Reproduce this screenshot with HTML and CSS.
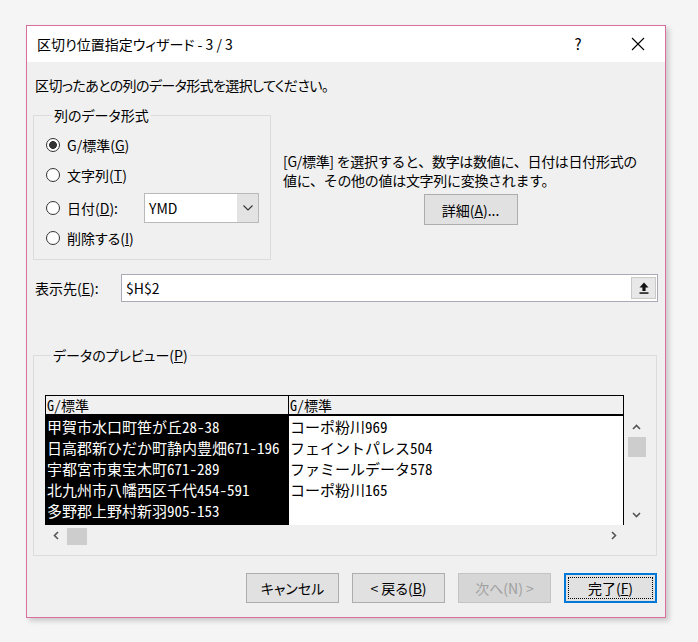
FILE: index.html
```html
<!DOCTYPE html>
<html lang="ja">
<head>
<meta charset="utf-8">
<title>区切り位置指定ウィザード</title>
<link rel="stylesheet" href="styles.css">
</head>
<body>
<div class="dialog">
  <div class="titlebar">
    <span class="title">区切り位置指定ウィザード - 3 / 3</span>
    <span class="cap-help">?</span>
    <span class="cap-close"><svg width="14" height="14" viewBox="0 0 14 14"><path d="M1 1L13 13M13 1L1 13" stroke="#000" stroke-width="1.1" fill="none"/></svg></span>
  </div>
  <div class="content">
    <p class="intro">区切ったあとの列のデータ形式を選択してください。</p>
    <div class="top">
      <fieldset class="group fmt">
        <legend>列のデータ形式</legend>
        <div class="radio r1"><span class="dot checked"></span><span>G/標準(<u>G</u>)</span></div>
        <div class="radio r2"><span class="dot"></span><span>文字列(<u>T</u>)</span></div>
        <div class="radio r3"><span class="dot"></span><span class="lbl">日付(<u>D</u>):</span>
          <div class="combo"><span class="val">YMD</span><span class="drop"><svg width="10" height="6" viewBox="0 0 10 6"><path d="M0.5 0.5L5 5L9.5 0.5" stroke="#333" stroke-width="1.1" fill="none"/></svg></span></div>
        </div>
        <div class="radio r4"><span class="dot"></span><span>削除する(<u>I</u>)</span></div>
      </fieldset>
      <div class="desc">
        <p>[G/標準] を選択すると、数字は数値に、日付は日付形式の<br>値に、その他の値は文字列に変換されます。</p>
        <button class="btn detail">詳細(<u>A</u>)...</button>
      </div>
    </div>
    <div class="dest">
      <span class="dest-lbl">表示先(<u>E</u>):</span>
      <div class="input"><span class="val">$H$2</span><span class="upbtn"><svg width="10" height="12" viewBox="0 0 10 12"><path d="M5 0.5L9.5 5.5H6.6V9H3.4V5.5H0.5Z" fill="#111"/><rect x="0.5" y="10.3" width="9" height="1.5" fill="#111"/></svg></span></div>
    </div>
    <fieldset class="group preview">
      <legend>データのプレビュー(<u>P</u>)</legend>
      <div class="grid">
        <div class="ghead">
          <div class="c1">G/標準</div>
          <div class="c2">G/標準</div>
        </div>
        <div class="gbody">
          <div class="c1">
            <div class="row">甲賀市水口町笹が丘28-38</div>
            <div class="row">日高郡新ひだか町静内豊畑671-196</div>
            <div class="row">宇都宮市東宝木町671-289</div>
            <div class="row">北九州市八幡西区千代454-591</div>
            <div class="row">多野郡上野村新羽905-153</div>
          </div>
          <div class="c2">
            <div class="row">コーポ粉川969</div>
            <div class="row">フェイントパレス504</div>
            <div class="row">ファミールデータ578</div>
            <div class="row">コーポ粉川165</div>
          </div>
        </div>
        <div class="vscroll">
          <span class="arr"><svg width="9" height="6" viewBox="0 0 9 6"><path d="M1 5L4.5 1.5L8 5" stroke="#555" stroke-width="1.6" fill="none"/></svg></span>
          <span class="vthumb"></span>
          <span class="spacer"></span>
          <span class="arr"><svg width="9" height="6" viewBox="0 0 9 6"><path d="M1 1L4.5 4.5L8 1" stroke="#555" stroke-width="1.6" fill="none"/></svg></span>
        </div>
        <div class="hscroll">
          <span class="arr"><svg width="6" height="9" viewBox="0 0 6 9"><path d="M5 1L1.5 4.5L5 8" stroke="#555" stroke-width="1.6" fill="none"/></svg></span>
          <span class="hthumb"></span>
          <span class="spacer"></span>
          <span class="arr"><svg width="6" height="9" viewBox="0 0 6 9"><path d="M1 1L4.5 4.5L1 8" stroke="#555" stroke-width="1.6" fill="none"/></svg></span>
        </div>
      </div>
    </fieldset>
    <div class="buttons">
      <button class="btn">キャンセル</button>
      <button class="btn">&lt; 戻る(<u>B</u>)</button>
      <button class="btn disabled">次へ(N) &gt;</button>
      <button class="btn default">完了(<u>F</u>)</button>
    </div>
  </div>
</div>
</body>
</html>
```
FILE: styles.css
```css
* { box-sizing: border-box; }
html, body { margin: 0; padding: 0; }
body {
  width: 698px;
  height: 642px;
  overflow: hidden;
  background: #f5f5f5;
  font-family: "Noto Sans CJK JP", sans-serif;
  font-size: 14px;
  color: #000;
  font-feature-settings: "palt";
}
.dialog {
  margin: 25px 0 0 26px;
  width: 640px;
  height: 593px;
  border: 1px solid #d9709c;
  background: #f0f0f0;
  box-shadow: 3px 3px 5px rgba(0, 0, 0, 0.18);
  display: flex;
  flex-direction: column;
}
.titlebar {
  height: 36px;
  background: #fff;
  display: flex;
  align-items: center;
  padding-left: 10px;
  flex: none;
}
.title { flex: 1; line-height: 18px; }
.cap-help { width: 30px; text-align: center; margin-right: 30px; font-size: 15px; line-height: 18px; }
.cap-close { width: 30px; display: flex; justify-content: center; margin-right: 12px; }
.content {
  flex: 1;
  display: flex;
  flex-direction: column;
  padding: 14px 7px 0 6px;
}
.intro { margin: 0 0 0 2px; line-height: 18px; letter-spacing: -0.6px; }
.top { display: flex; margin-top: 12px; }
fieldset.group {
  margin: 0;
  padding: 0;
  min-width: 0;
  border: 1px solid #dcdcdc;
}
legend { margin-left: 6px; padding: 0 2px; line-height: 18px; }
fieldset.fmt { width: 238px; height: 154px; padding: 10px 0 0 12px; flex: none; }
.radio { display: flex; align-items: center; height: 22px; line-height: 18px; }
.r2 { margin-top: 8px; }
.r3 { margin-top: 7px; height: 30px; }
.r4 { margin-top: 4px; }
.dot {
  width: 14px;
  height: 14px;
  border: 1px solid #333;
  border-radius: 50%;
  background: #fff;
  margin-right: 7px;
  flex: none;
}
.dot.checked { background: radial-gradient(circle, #333 0 3.6px, #fff 4.2px); }
.lbl { width: 77px; }
.combo {
  width: 115px;
  height: 30px;
  border: 1px solid #b9b9b9;
  background: #fff;
  display: flex;
}
.combo .val { flex: 1; padding-left: 4px; line-height: 28px; }
.combo .drop {
  width: 21px;
  background: #e3e3e3;
  display: flex;
  align-items: center;
  justify-content: center;
}
.desc {
  flex: 1;
  margin-left: 12px;
  padding-top: 46px;
  display: flex;
  flex-direction: column;
  align-items: center;
}
.desc p { margin: 0; line-height: 19px; align-self: flex-start; font-feature-settings: normal; letter-spacing: -0.3px; }
.btn {
  font: inherit;
  font-feature-settings: "palt";
  color: #000;
  width: 93px;
  height: 30px;
  padding: 0;
  background: #e1e1e1;
  border: 1px solid #adadad;
  line-height: 18px;
}
.detail { margin-top: 4px; width: 94px; height: 31px; }
.dest { display: flex; align-items: center; margin-top: 14px; height: 28px; flex: none; }
.dest-lbl { margin-left: 2px; line-height: 18px; }
.input {
  margin-left: auto;
  width: 537px;
  height: 28px;
  border: 1px solid #a9aab5;
  background: #fff;
  display: flex;
  align-items: center;
}
.input .val { flex: 1; padding-left: 4px; line-height: 18px; }
.upbtn {
  width: 25px;
  height: 22px;
  margin-right: 1px;
  background: #e8e8e8;
  border: 1px solid #c9c9c9;
  display: flex;
  align-items: center;
  justify-content: center;
}
fieldset.preview { margin-top: 44px; width: 624px; height: 210px; padding: 31px 0 0 11px; flex: none; }
.grid {
  display: grid;
  grid-template-columns: 579px 22px;
  grid-template-rows: 21px 109px 21px;
  font-feature-settings: "hwid";
  font-size: 15px;
}
.ghead {
  grid-column: 1;
  grid-row: 1;
  display: flex;
  border: 1px solid #000;
  border-bottom-width: 2px;
  line-height: 18px;
  font-size: 14px;
}
.ghead .c1 { width: 242px; padding-left: 1px; }
.ghead .c2 { flex: 1; border-left: 1px solid #000; padding-left: 1px; }
.gbody {
  grid-column: 1;
  grid-row: 2;
  display: flex;
  border-left: 1px solid #000;
  border-right: 1px solid #000;
}
.gbody .c1 { width: 242px; background: #000; color: #fff; padding-left: 1px; }
.gbody .c2 { flex: 1; background: #fff; border-left: 1px solid #000; padding-left: 1px; }
.row { height: 21px; line-height: 21px; white-space: nowrap; }
.vscroll {
  grid-column: 2;
  grid-row: 2;
  display: flex;
  flex-direction: column;
  align-items: center;
}
.vscroll .arr { height: 21px; width: 18px; margin-left: 3px; display: flex; align-items: center; justify-content: center; }
.vthumb { width: 18px; height: 20px; margin-left: 3px; background: #cdcdcd; }
.spacer { flex: 1; }
.hscroll {
  grid-column: 1;
  grid-row: 3;
  display: flex;
  align-items: center;
}
.hscroll .arr { width: 21px; height: 21px; display: flex; align-items: center; justify-content: center; }
.hthumb { width: 20px; height: 17px; margin-left: 1px; margin-top: 2px; background: #cdcdcd; }
.buttons {
  display: flex;
  justify-content: flex-end;
  gap: 13px;
  margin-top: 17px;
  margin-right: 1px;
}
.btn.disabled { color: #a0a0a0; background: #d6d6d6; border-color: #c4c4c4; }
.btn.default { border: 2px solid #0078d7; outline: 1px dotted #000; outline-offset: -5px; }
```
